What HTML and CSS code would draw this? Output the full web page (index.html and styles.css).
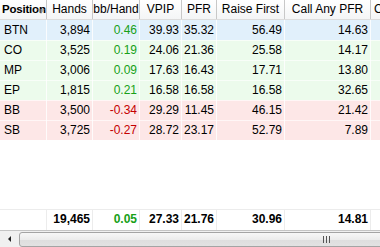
FILE: index.html
```html
<!DOCTYPE html>
<html>
<head>
<meta charset="utf-8">
<link rel="stylesheet" href="styles.css">
</head>
<body>
<div class="grid">
  <div class="row head">
    <div class="hc first">Position<span class="sort"></span></div>
    <div class="hc">Hands</div>
    <div class="hc">bb/Hand</div>
    <div class="hc">VPIP</div>
    <div class="hc">PFR</div>
    <div class="hc">Raise First</div>
    <div class="hc">Call Any PFR</div>
    <div class="hc lft">Call</div>
  </div>
  <div class="body">
    <div class="row data blue">
      <div class="c l">BTN</div><div class="c">3,894</div><div class="c pos">0.46</div><div class="c">39.93</div><div class="c">35.32</div><div class="c">56.49</div><div class="c">14.63</div><div class="c"></div>
    </div>
    <div class="row data green">
      <div class="c l">CO</div><div class="c">3,525</div><div class="c pos">0.19</div><div class="c">24.06</div><div class="c">21.36</div><div class="c">25.58</div><div class="c">14.17</div><div class="c"></div>
    </div>
    <div class="row data green">
      <div class="c l">MP</div><div class="c">3,006</div><div class="c pos">0.09</div><div class="c">17.63</div><div class="c">16.43</div><div class="c">17.71</div><div class="c">13.80</div><div class="c"></div>
    </div>
    <div class="row data green">
      <div class="c l">EP</div><div class="c">1,815</div><div class="c pos">0.21</div><div class="c">16.58</div><div class="c">16.58</div><div class="c">16.58</div><div class="c">32.65</div><div class="c"></div>
    </div>
    <div class="row data pink">
      <div class="c l">BB</div><div class="c">3,500</div><div class="c neg">-0.34</div><div class="c">29.29</div><div class="c">11.45</div><div class="c">46.15</div><div class="c">21.42</div><div class="c"></div>
    </div>
    <div class="row data pink">
      <div class="c l">SB</div><div class="c">3,725</div><div class="c neg">-0.27</div><div class="c">28.72</div><div class="c">23.17</div><div class="c">52.79</div><div class="c">7.89</div><div class="c"></div>
    </div>
  </div>
  <div class="row total">
    <div class="c l"></div><div class="c">19,465</div><div class="c pos">0.05</div><div class="c">27.33</div><div class="c">21.76</div><div class="c">30.96</div><div class="c">14.81</div><div class="c"></div>
  </div>
  <div class="hscroll">
    <div class="arrow"><span class="tri"></span></div>
    <div class="thumb"><span class="grip"></span></div>
  </div>
</div>
</body>
</html>
```
FILE: styles.css
```css
html, body {
  margin: 0;
  padding: 0;
  background: #fff;
}
.grid {
  width: 380px;
  height: 247px;
  overflow: hidden;
  display: flex;
  flex-direction: column;
  font-family: "Liberation Sans", Arial, sans-serif;
  font-size: 12px;
  color: #000;
}
.row {
  display: grid;
  grid-template-columns: 47px 46px 47px 42px 35px 68px 86px 60px;
  width: 431px;
  flex: none;
}
.head {
  height: 20px;
  background: linear-gradient(#ffffff, #f4f5f6);
  border-bottom: 1px solid #dcdcdc;
  box-sizing: border-box;
}
.hc {
  position: relative;
  border-right: 1px solid #c8c8c8;
  text-align: center;
  line-height: 19px;
  white-space: nowrap;
  overflow: visible;
}
.hc.first {
  text-align: left;
  padding-left: 2px;
  font-weight: bold;
  font-size: 11.5px;
  letter-spacing: -0.2px;
}
.hc.lft {
  text-align: left;
  padding-left: 3px;
}
.sort {
  position: absolute;
  left: 37px;
  top: 9px;
  width: 0;
  height: 0;
  border-left: 4px solid transparent;
  border-right: 4px solid transparent;
  border-top: 5px solid #888;
  opacity: 0.6;
  z-index: -0;
}
.body {
  flex: 1;
}
.data {
  height: 20px;
}
.c {
  text-align: right;
  padding-right: 2px;
  line-height: 20px;
  border-right: 1px solid rgba(255, 255, 255, 0.85);
  border-bottom: 1px solid rgba(255, 255, 255, 0.6);
  box-sizing: border-box;
  white-space: nowrap;
}
.c.l {
  text-align: left;
  padding-left: 4px;
}
.blue { background: #e1f0fb; }
.green { background: #ecfbec; }
.pink { background: #fde7e7; }
.pos { color: #17a017; }
.neg { color: #c40000; }
.total {
  height: 21px;
  border-top: 1px solid #ececec;
  box-sizing: border-box;
  font-weight: bold;
}
.total .c {
  border-right: 1px solid #ececec;
  border-bottom: none;
  line-height: 19px;
}
.hscroll {
  height: 17px;
  flex: none;
  display: flex;
  align-items: center;
  background: #f0f0f0;
  border-top: 1px solid #c4c4c4;
  box-sizing: border-box;
  width: 380px;
}
.arrow {
  width: 19px;
  height: 15px;
  display: flex;
  align-items: center;
  justify-content: center;
  flex: none;
}
.tri {
  width: 0;
  height: 0;
  border-top: 3px solid transparent;
  border-bottom: 3px solid transparent;
  border-right: 3px solid #222;
}
.thumb {
  flex: 1;
  height: 13px;
  margin-right: -4px;
  border: 1px solid #a4a4a4;
  border-radius: 3px;
  background: linear-gradient(#f7f7f7, #ececec 50%, #dedede 51%, #e2e2e2);
  display: flex;
  align-items: center;
  justify-content: flex-end;
  padding-right: 53px;
}
.grip {
  width: 7px;
  height: 7px;
  background: repeating-linear-gradient(90deg, #555 0 1px, transparent 1px 3px);
}
```
